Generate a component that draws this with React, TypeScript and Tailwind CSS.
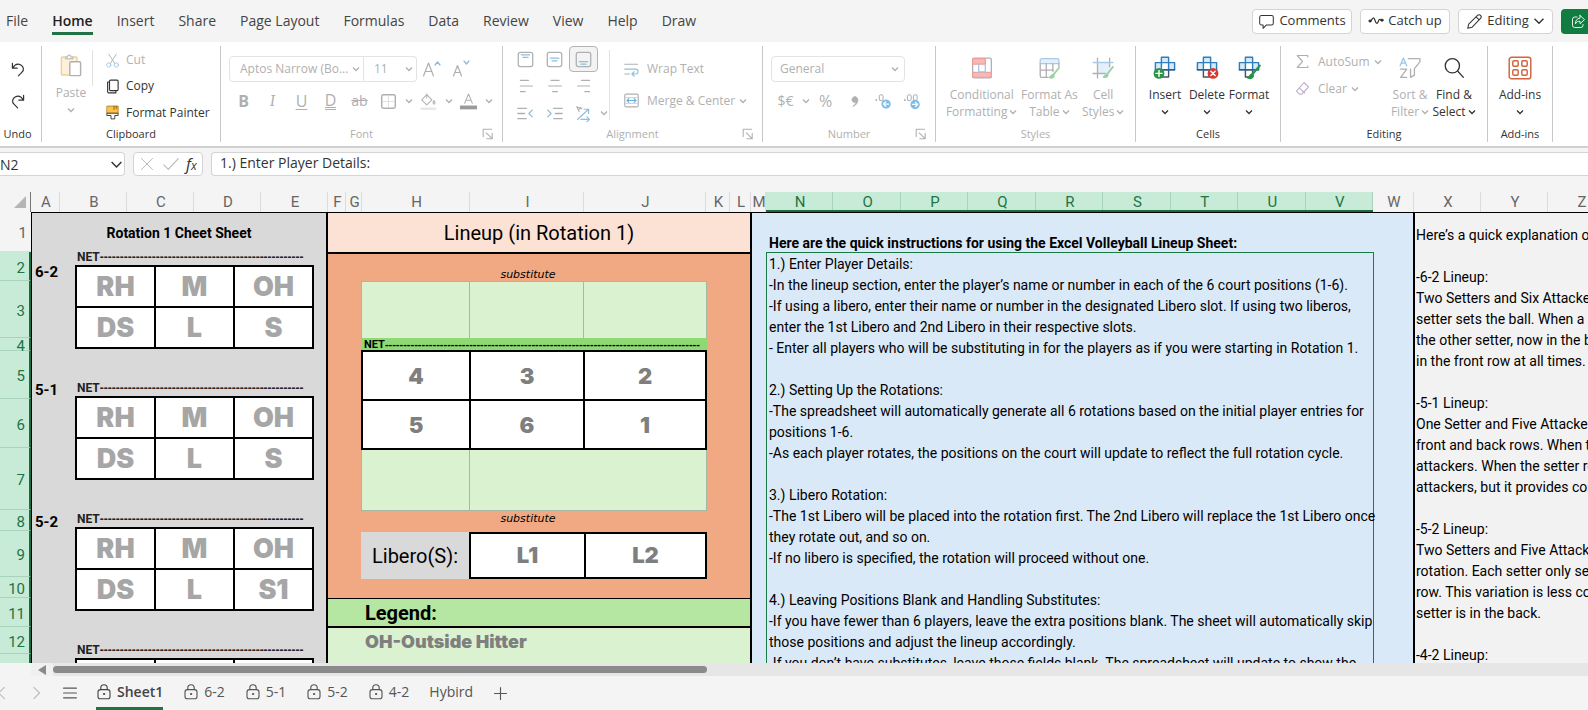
import React from "react";
import clsx from "clsx";

type IconProps = { children: React.ReactNode; size?: number; className?: string };

const Icon = ({ children, size = 18, className }: IconProps) => (
  <svg
    width={size}
    height={size}
    viewBox="0 0 20 20"
    fill="none"
    stroke="currentColor"
    strokeWidth={1.2}
    strokeLinecap="round"
    strokeLinejoin="round"
    className={clsx("shrink-0", className)}
    aria-hidden="true"
  >
    {children}
  </svg>
);

const Chevron = ({ size = 8, className }: { size?: number; className?: string }) => (
  <svg
    width={size}
    height={size}
    viewBox="0 0 8 8"
    fill="none"
    stroke="currentColor"
    strokeWidth={size > 8 ? 0.9 : 1.3}
    className={clsx("shrink-0", className)}
    aria-hidden="true"
  >
    <path d="M1 2.5 4 5.5 7 2.5" />
  </svg>
);

const menuTabs = [
  "File",
  "Home",
  "Insert",
  "Share",
  "Page Layout",
  "Formulas",
  "Data",
  "Review",
  "View",
  "Help",
  "Draw",
];

const MenuBar = () => (
  <header className="flex h-[42px] shrink-0 items-center overflow-hidden pl-1.5">
    <nav className="flex flex-1 gap-6">
      {menuTabs.map((tab) => (
        <button
          key={tab}
          className={clsx(
            "flex h-7 items-center whitespace-nowrap border-b-3 pt-0.5 text-sm",
            tab === "Home"
              ? "border-[#217346] font-semibold text-[#222]"
              : "border-transparent text-[#444]"
          )}
        >
          {tab}
        </button>
      ))}
    </nav>
    <div className="flex items-center gap-2 text-[13px] text-[#333]">
      <button className="flex h-[25px] w-[100px] items-center justify-center gap-1 rounded border border-[#d4d4d4] bg-white">
        <Icon size={17}>
          <path d="M4 3h12a2 2 0 0 1 2 2v7a2 2 0 0 1-2 2h-6l-4 4v-4H4a2 2 0 0 1-2-2V5a2 2 0 0 1 2-2Z" />
        </Icon>
        Comments
      </button>
      <button className="flex h-[25px] w-[90px] items-center justify-center gap-1 rounded border border-[#d4d4d4] bg-white">
        <Icon size={16}>
          <circle cx="2.5" cy="10" r="1.4" fill="currentColor" />
          <circle cx="17.5" cy="9" r="1.4" fill="currentColor" />
          <path d="M3 10c2-1 2.500-4 4-4s2 7 4 7 2-5 3.500-5 1 1.500 2.500 1" strokeWidth={1.5} />
        </Icon>
        Catch up
      </button>
      <button className="flex h-[25px] w-[95px] items-center justify-center gap-1 rounded border border-[#d4d4d4] bg-white">
        <Icon size={17}>
          <path d="m2 18 1.200-5L13.500 2.700a2.400 2.400 0 0 1 3.600 3.600L7 16.800 2 18ZM11.800 4.500l3.700 3.700" />
        </Icon>
        Editing
        <Chevron size={12} />
      </button>
      <button
        aria-label="Share"
        className="flex h-[25px] w-[27px] items-center rounded-l bg-[#107c41] pl-2.5 text-white"
      >
        <Icon size={15}>
          <path d="M8 4H5a3 3 0 0 0-3 3v8a3 3 0 0 0 3 3h8a3 3 0 0 0 3-3v-1" />
          <path d="M12 2v3.500C8 6 6 8.500 6 13c1.500-2.500 3-3.300 6-3.300V13l6-5.500L12 2Z" />
        </Icon>
      </button>
    </div>
  </header>
);

type GroupProps = {
  label: string;
  width: string;
  off?: boolean;
  launcher?: boolean;
  children: React.ReactNode;
};

const Group = ({ label, width, off, launcher, children }: GroupProps) => (
  <section
    className={clsx(
      "flex h-24 shrink-0 flex-col border-r border-[#c8c8c8] text-xs",
      off ? "text-[#b0b0b0]" : "text-[#333]",
      width
    )}
  >
    <div className="flex h-20">{children}</div>
    <div className="flex h-4 items-center justify-center text-[11px]">
      {launcher && <span className="w-5" />}
      <span className="flex-1 text-center">{label}</span>
      {launcher && (
        <button aria-label={label + " settings"} className="w-5">
          <Icon size={12}>
            <path d="M2 14V2h14M7 8l9 9M17 9v9H8" strokeWidth={1.8} />
          </Icon>
        </button>
      )}
    </div>
  </section>
);

const Tool = ({ label, children, active }: { label: string; children: React.ReactNode; active?: boolean }) => (
  <button
    aria-label={label}
    className={clsx(
      "flex h-[26px] w-[29px] items-center justify-center",
      active && "rounded border border-[#b5b5b5] bg-[#f3f3f3]"
    )}
  >
    {children}
  </button>
);

const Drop = ({ label }: { label: string }) => (
  <button aria-label={label} className="flex h-[26px] w-[11px] items-center justify-center">
    <Chevron />
  </button>
);

const BigButton = ({
  lines,
  icon,
  off,
  width,
}: {
  lines: string[];
  icon: React.ReactNode;
  off?: boolean;
  width: string;
}) => (
  <button
    className={clsx(
      "flex flex-col items-center whitespace-nowrap pt-2 text-xs leading-[17px]",
      off ? "text-[#b0b0b0]" : "text-[#333]",
      width
    )}
  >
    <span className="mb-1 flex h-7 items-center">{icon}</span>
    <span>{lines[0]}</span>
    <span className="flex h-[17px] items-center gap-0.5">
      {lines[1]}
      <Chevron />
    </span>
  </button>
);

const CellsIcon = ({ children }: { children: React.ReactNode }) => (
  <Icon size={24}>
    <path d="M7 1h6v4.500h5v6h-5v-6H7v6H2v-6h5Z" fill="#d6ebfa" stroke="#2f7fc0" />
    <path d="M7 11.500v6h6v-6Z" fill="#fff" stroke="#44546a" />
    <path d="M2 11.500h16" stroke="#2f5f8f" />
    {children}
  </Icon>
);

const AlignLines = ({ lines }: { lines: number[][] }) => (
  <Icon size={16}>
    {lines.map(([from, to], i) => (
      <path key={i} d={`M${from} ${3 + i * 7}H${to}`} strokeWidth={1.5} />
    ))}
  </Icon>
);

const Ribbon = () => (
  <div className="z-10 flex h-[106px] shrink-0 overflow-hidden border-b-2 border-[#d0d0d0] bg-white pt-1">
    <Group label="Undo" width="w-[42px] pr-1.5">
      <div className="flex w-full flex-col items-center gap-1.5 pt-2.5">
        <Tool label="Undo">
          <Icon size={16}>
            <path d="M3 3v6h6M3.500 8.500C6 4.500 10 3 13.500 5s4.500 6 1.500 9L10.500 18.500" strokeWidth={1.5} />
          </Icon>
        </Tool>
        <Tool label="Redo">
          <Icon size={16}>
            <path d="M17 3v6h-6M16.500 8.500C14 4.500 10 3 6.500 5S2 11 5 14l4.500 4.500" strokeWidth={1.5} />
          </Icon>
        </Tool>
      </div>
    </Group>

    <Group label="Clipboard" width="w-[179px]">
      <button className="flex w-[50px] flex-col items-center pl-2 pt-2 text-[#b0b0b0]">
        <Icon size={24}>
          <path d="M12 17.500H3a1 1 0 0 1-1-1V3.500a1 1 0 0 1 1-1h11a1 1 0 0 1 1 1V6" stroke="#f0cf95" fill="#fdf1dc" />
          <path d="M5.500 4V2.500h1.500a1.500 1.500 0 0 1 3 0h1.500V4Z" fill="#fff" stroke="#c5c5c5" />
          <rect x="9" y="6.500" width="9" height="11.500" rx="1" fill="#fff" />
        </Icon>
        <span className="mt-1.5 leading-[18px]">Paste</span>
        <Chevron className="mt-1" />
      </button>
      <div className="mt-1 h-9 border-r border-[#e1e1e1]" />
      <div className="flex flex-col pt-px pl-3">
        <button className="flex h-[27px] items-center gap-1.5 text-[#b0b0b0]">
          <Icon size={15}>
            <path d="M5 1.500 13 14M15 1.500 7 14" />
            <circle cx="5" cy="16" r="2.800" stroke="#9fc8e4" />
            <circle cx="15" cy="16" r="2.800" stroke="#9fc8e4" />
          </Icon>
          Cut
        </button>
        <button className="flex h-[27px] items-center gap-1.5">
          <Icon size={15}>
            <rect x="6" y="1.500" width="11.500" height="14" rx="1.500" strokeWidth={1.5} />
            <path d="M6 4H3.500v13a1.500 1.500 0 0 0 1.500 1.500h9.500V16" strokeWidth={1.5} />
          </Icon>
          Copy
        </button>
        <button className="flex h-[27px] items-center gap-1.5 whitespace-nowrap">
          <Icon size={15}>
            <path d="M3 1.500h14.500V11H3z" fill="#fbc34a" stroke="#b97b16" />
            <path d="M12 1.500V6M15 1.500V5" stroke="#8a5a10" />
            <path d="M3 11h14.500v3H13v4.500H8V14H3z" fill="#fff" />
          </Icon>
          Format Painter
        </button>
      </div>
    </Group>

    <Group label="Font" width="w-[282px]" off launcher>
      <div className="flex flex-col gap-1.5 pl-2 pt-2.5">
        <div className="flex items-center">
          <label className="relative flex items-center">
            <span className="sr-only">Font name</span>
            <select className="h-[26px] w-[135px] appearance-none rounded-l border border-[#e3e3e3] pl-2.5">
              <option>Aptos Narrow (Bo...</option>
            </select>
            <Chevron className="absolute right-1" />
          </label>
          <label className="relative flex items-center">
            <span className="sr-only">Font size</span>
            <select className="h-[26px] w-[53px] appearance-none rounded-r border border-l-0 border-[#e3e3e3] pl-2.5">
              <option>11</option>
            </select>
            <Chevron className="absolute right-1" />
          </label>
          <Tool label="Increase font size">
            <Icon size={20}>
              <path d="m1.500 17 5-13 5 13M3.300 12.500h6.400" />
              <path d="m13 6 2.500-3L18 6" stroke="#8fb9d6" />
            </Icon>
          </Tool>
          <Tool label="Decrease font size">
            <Icon size={20}>
              <path d="m2.500 17 4-10.500L10.500 17M4 13.500h5" />
              <path d="m13 2 2.500 3L18 2" stroke="#8fb9d6" />
            </Icon>
          </Tool>
        </div>
        <div className="flex text-base">
          <Tool label="Bold">
            <span className="font-bold">B</span>
          </Tool>
          <Tool label="Italic">
            <span className="font-serif italic">I</span>
          </Tool>
          <Tool label="Underline">
            <span className="underline underline-offset-2">U</span>
          </Tool>
          <Tool label="Double underline">
            <span className="border-b-3 border-double border-[#b0b0b0] leading-[14px]">D</span>
          </Tool>
          <Tool label="Strikethrough">
            <span className="text-sm line-through">ab</span>
          </Tool>
          <Tool label="Borders">
            <Icon size={17}>
              <rect x="2" y="2" width="16" height="16" rx="2" strokeWidth={1.7} />
              <path d="M10 3v14M3 10h14" stroke="#dcdcdc" strokeWidth={1} />
            </Icon>
          </Tool>
          <Drop label="Border styles" />
          <Tool label="Fill colour">
            <Icon size={17}>
              <path d="m8 2 6 6-6 6-6-6 6-6ZM8 6V1M16.500 9c1.500 2 1.500 4 0 4s-1.500-2 0-4Z" />
              <path d="M2 18.500h16" stroke="#e8e8e8" strokeWidth={3} />
            </Icon>
          </Tool>
          <Drop label="Fill colours" />
          <Tool label="Font colour">
            <Icon size={17}>
              <path d="M5.500 12 10 1l4.500 11M7 8.500h6" />
              <path d="M0 17h20" stroke="#9a9a9a" strokeWidth={4.5} strokeLinecap="butt" />
            </Icon>
          </Tool>
          <Drop label="Font colours" />
        </div>
      </div>
    </Group>

    <Group label="Alignment" width="w-[260px]" off launcher>
      <div className="flex flex-col gap-px pl-2">
        <div className="flex">
          {[4.5, 8.5, 12.5].map((y, i) => (
            <Tool key={y} label={["Top", "Middle", "Bottom"][i]} active={i === 2}>
              <Icon size={17}>
                <rect x="1.500" y="1.500" width="17" height="17" rx="2.500" strokeWidth={1.5} />
                <path d={`M5 ${y}h10M7 ${y + 3}h6`} stroke="#8cc0e0" strokeWidth={1.5} />
              </Icon>
            </Tool>
          ))}
        </div>
        <div className="flex">
          <Tool label="Align left">
            <AlignLines lines={[[3, 13], [3, 18], [3, 9]]} />
          </Tool>
          <Tool label="Centre">
            <AlignLines lines={[[5, 15], [2, 18], [7, 13]]} />
          </Tool>
          <Tool label="Align right">
            <AlignLines lines={[[7, 17], [2, 17], [11, 17]]} />
          </Tool>
        </div>
        <div className="flex">
          <Tool label="Decrease indent">
            <Icon size={17}>
              <path d="M1 4h10M1 10h8M1 16h10" strokeWidth={1.5} />
              <path d="m18 6-4 4 4 4" stroke="#8cc0e0" strokeWidth={1.5} />
            </Icon>
          </Tool>
          <Tool label="Increase indent">
            <Icon size={17}>
              <path d="M9 4h10M11 10h8M9 16h10" strokeWidth={1.5} />
              <path d="m2 6 4 4-4 4" stroke="#8cc0e0" strokeWidth={1.5} />
            </Icon>
          </Tool>
          <Tool label="Orientation">
            <Icon size={17}>
              <path d="m2 2 6 2.500M2 2l3 6M4 6l3-3" />
              <path d="M3 17 16 5M11 5h5v5M7 17h10M14 14l3 3-3 3" stroke="#8cc0e0" strokeWidth={1.4} />
            </Icon>
          </Tool>
          <Drop label="Orientations" />
        </div>
      </div>
      <div className="mt-1 h-[70px] border-r border-[#e1e1e1]" />
      <div className="flex flex-col gap-1.5 pl-3.5 pt-2.5">
        <button className="flex h-[26px] items-center gap-2">
          <Icon size={15}>
            <path d="M1 3h17M1 16h6" strokeWidth={1.5} />
            <path d="M1 9.500h14.500a3 3 0 0 1 0 6.500H11M13.500 13 10.500 16l3 3" stroke="#8cc0e0" strokeWidth={1.5} />
          </Icon>
          Wrap Text
        </button>
        <button className="flex h-[25px] items-center gap-2 whitespace-nowrap">
          <Icon size={15}>
            <rect x="1" y="1.500" width="18" height="17" rx="2" strokeWidth={1.5} />
            <path d="M2 6h16M2 14h16" stroke="#d0d0d0" />
            <path d="M4 10h12M6.500 7.500 4 10l2.500 2.500M13.500 7.500 16 10l-2.500 2.500" stroke="#6cb0dc" strokeWidth={1.5} />
          </Icon>
          Merge & Center
          <Chevron className="-ml-1" />
        </button>
      </div>
    </Group>

    <Group label="Number" width="w-[173px]" off launcher>
      <div className="flex flex-col gap-1.5 pl-2 pt-2.5">
        <label className="relative flex w-[134px] items-center">
          <span className="sr-only">Number format</span>
          <select className="h-[26px] w-full appearance-none rounded border border-[#e3e3e3] pl-2">
            <option>General</option>
          </select>
          <Chevron className="absolute right-1.5" />
        </label>
        <div className="flex text-sm">
          <Tool label="Currency">$€</Tool>
          <Drop label="Currencies" />
          <Tool label="Percent">
            <span className="text-base">%</span>
          </Tool>
          <Tool label="Comma">
            <Icon size={14}>
              <path d="M10 4a4 4 0 1 0 1.500 7.500C11 14 9.500 16 7 17.500 12 16 14.500 12 14 7.500 13.700 5.500 12 4 10 4Z" fill="currentColor" />
            </Icon>
          </Tool>
          <Tool label="Decrease decimal">
            <Icon size={17}>
              <path d="M1.500 8v.5" strokeWidth={2} />
              <rect x="5" y="2" width="4.500" height="7" rx="2.200" />
              <circle cx="13" cy="13" r="5.500" fill="#7fbdea" stroke="none" />
              <path d="M16 13h-6M12.500 10.500 10 13l2.500 2.500" stroke="#fff" strokeWidth={1.5} />
            </Icon>
          </Tool>
          <Tool label="Increase decimal">
            <Icon size={17}>
              <path d="M1 8v.5" strokeWidth={2} />
              <rect x="4" y="2" width="4.500" height="7" rx="2.200" />
              <rect x="11" y="2" width="4.500" height="7" rx="2.200" />
              <circle cx="13" cy="13.500" r="5.500" fill="#7fbdea" stroke="none" />
              <path d="M10 13.500h6M13.500 11l2.500 2.500-2.500 2.500" stroke="#fff" strokeWidth={1.5} />
            </Icon>
          </Tool>
        </div>
      </div>
    </Group>

    <Group label="Styles" width="w-[200px]" off>
      <BigButton
        off
        width="w-[92px]"
        lines={["Conditional", "Formatting"]}
        icon={
          <Icon size={22}>
            <rect x="1.500" y="1" width="17" height="18" rx="1.500" fill="#fff" />
            <path d="M1.500 1.500H13v5H1.500zM1.500 14h17v4.500h-17z" fill="#f9b8b5" stroke="#ef9f9c" />
            <path d="M7 7v6.500h6V7" stroke="#a9c6e8" />
          </Icon>
        }
      />
      <BigButton
        off
        width="w-[44px]"
        lines={["Format As", "Table"]}
        icon={
          <Icon size={22}>
            <path d="M2 6h17V3a1.500 1.500 0 0 0-1.500-1.500h-14A1.500 1.500 0 0 0 2 3v3Z" fill="#e3f0fb" stroke="#a9cbe8" />
            <path d="M2 6v11a1.500 1.500 0 0 0 1.500 1.500H9M2 12h12M7.500 6v12M13.500 6v7M19 6v3" />
            <path d="m19 10-5 6M14 16c-2 0-1.500 2-3.500 2.500 2 .8 4.500 0 3.500-2.500Z" stroke="#98d3a0" fill="#98d3a0" strokeWidth={1.7} />
          </Icon>
        }
      />
      <BigButton
        off
        width="w-16"
        lines={["Cell", "Styles"]}
        icon={
          <Icon size={22}>
            <path d="M5 5h11v10H5z" fill="#e3f0fb" stroke="none" />
            <path d="M5 1v18M16 1v8M1 15h11" />
            <path d="M1 5h18" stroke="#a9cbe8" />
            <path d="m19 9-5 6.500M14 15.500c-2 0-1.500 2-3.500 2.500 2 .8 4.500 0 3.500-2.500Z" stroke="#98d3a0" fill="#98d3a0" strokeWidth={1.7} />
          </Icon>
        }
      />
    </Group>

    <Group label="Cells" width="w-[145px]">
      <div className="flex pl-2">
        <BigButton
          width="w-[42px]"
          lines={["Insert"]}
          icon={
            <CellsIcon>
              <circle cx="5" cy="14.500" r="4.500" fill="#2b9348" stroke="none" />
              <path d="M5 12v5M2.500 14.500h5" stroke="#fff" />
            </CellsIcon>
          }
        />
        <BigButton
          width="w-[42px]"
          lines={["Delete"]}
          icon={
            <CellsIcon>
              <circle cx="15" cy="14.500" r="4.500" fill="#d93831" stroke="none" />
              <path d="m13.200 12.700 3.600 3.600M16.800 12.700l-3.600 3.600" stroke="#fff" />
            </CellsIcon>
          }
        />
        <BigButton
          width="w-[42px]"
          lines={["Format"]}
          icon={
            <CellsIcon>
              <path d="m19 8-6 7M13 15c-2 0-1.500 2.500-4 3 2.500 1 5 0 4-3Z" stroke="#2b9348" fill="#2b9348" strokeWidth={1.8} />
            </CellsIcon>
          }
        />
      </div>
    </Group>

    <Group label="Editing" width="w-[207px]">
      <div className="flex w-[108px] flex-col pl-3.5 pt-0.5 text-[#b0b0b0]">
        <button className="flex h-[27px] items-center gap-2">
          <Icon size={15}>
            <path d="M17 4V2H3l7 8-7 8h14v-2" strokeWidth={1.6} />
          </Icon>
          AutoSum
          <Chevron className="-ml-1" />
        </button>
        <button className="flex h-[27px] items-center gap-2">
          <Icon size={15}>
            <path d="m12 2 6 6-9 9.500H6L2 13.500 12 2Z" stroke="#c3aecb" strokeWidth={1.5} />
            <path d="m6 9.500 7 6.500" stroke="#c3aecb" strokeWidth={1.5} />
          </Icon>
          Clear
          <Chevron className="-ml-1" />
        </button>
      </div>
      <BigButton
        off
        width="w-[42px]"
        lines={["Sort &", "Filter"]}
        icon={
          <Icon size={22}>
            <path d="m1 8 3-7 3 7M2 5.500h4" stroke="#9cc7ea" />
            <path d="M1.500 11H7l-5.500 7.500H7" />
            <path d="M8.500 1.500H19v3l-5 6v6l-3.500 2V11" />
          </Icon>
        }
      />
      <BigButton
        width="w-[46px]"
        lines={["Find &", "Select"]}
        icon={
          <Icon size={22}>
            <circle cx="8.500" cy="8" r="6.500" />
            <path d="m13.500 13 5 5.500" />
          </Icon>
        }
      />
    </Group>

    <Group label="Add-ins" width="w-[65px]">
      <BigButton
        width="w-full"
        lines={["Add-ins"]}
        icon={
          <Icon size={24}>
            <g stroke="#d0643f">
              <rect x="1" y="1" width="18" height="18" rx="2" />
              <rect x="4" y="4" width="4.500" height="4.500" rx="1" />
              <rect x="11.500" y="4" width="4.500" height="4.500" rx="1" />
              <rect x="4" y="11.500" width="4.500" height="4.500" rx="1" />
              <rect x="11.500" y="11.500" width="4.500" height="4.500" rx="1" />
            </g>
          </Icon>
        }
      />
    </Group>
  </div>
);

const FormulaBar = () => (
  <div className="flex h-11 shrink-0 items-start gap-2 pt-1 text-sm text-[#333]">
    <label className="relative flex items-center">
      <span className="sr-only">Name box</span>
      <input
        defaultValue="N2"
        className="h-6 w-[125px] rounded-r border border-l-0 border-[#d4d4d4] bg-white"
      />
      <Chevron size={13} className="absolute right-0.5" />
    </label>
    <div className="flex h-6 w-[70px] items-center justify-around rounded border border-[#d4d4d4] bg-white px-0.5 text-[#b8b8b8]">
      <button aria-label="Cancel">
        <Icon size={16}>
          <path d="m3 3 14 14M17 3 3 17" />
        </Icon>
      </button>
      <button aria-label="Enter">
        <Icon size={18}>
          <path d="m2 11 5 5L18 4" />
        </Icon>
      </button>
      <button className="text-base leading-5 text-[#333] italic">
        f<span className="text-xs">x</span>
      </button>
    </div>
    <input
      aria-label="Formula"
      defaultValue="1.) Enter Player Details:"
      className="h-6 flex-1 rounded-l border border-r-0 border-[#d4d4d4] bg-white pb-1 pl-2"
    />
  </div>
);

const leftColumns = [
  ["A", "w-[29px]"],
  ["B", "w-[67px]"],
  ["C", "w-[67px]"],
  ["D", "w-[67px]"],
  ["E", "w-[67px]"],
  ["F", "w-[18px]"],
  ["G", "w-4"],
  ["H", "w-[108px]"],
  ["I", "w-[114px]"],
  ["J", "w-[122px]"],
  ["K", "w-6"],
  ["L", "w-[21px]"],
  ["M", "w-[15px]"],
];

const rightColumns = [
  ["W", "w-[41px]"],
  ["X", "w-[67px]"],
  ["Y", "w-[67px]"],
  ["Z", "w-[67px]"],
];

const ColumnLetter = ({ name, width }: { name: string; width: string }) => (
  <div className={clsx("flex shrink-0 items-center justify-center border-r border-[#dcdcdc] pl-0.5", width)}>
    {name}
  </div>
);

const ColumnHeader = () => (
  <div className="flex h-5 shrink-0 font-['Roboto',sans-serif] text-[15px] leading-none text-[#666]">
    <div className="flex w-[31px] shrink-0 items-center justify-end border-r border-[#777] pr-1">
      <svg width="12" height="12" viewBox="0 0 12 12" aria-hidden="true">
        <path d="M12 0v12H0z" fill="#b5b5b5" />
      </svg>
    </div>
    {leftColumns.map(([name, width]) => (
      <ColumnLetter key={name} name={name} width={width} />
    ))}
    <div className="flex w-[607px] shrink-0 border-b-2 border-[#1b6b41] bg-[#c8ebd7] text-[#217346]">
      {"NOPQRSTUV".split("").map((name) => (
        <div key={name} className="flex flex-1 items-center justify-center border-r border-[#a9d3bb] pt-0.5 pl-0.5">
          {name}
        </div>
      ))}
    </div>
    {rightColumns.map(([name, width]) => (
      <ColumnLetter key={name} name={name} width={width} />
    ))}
  </div>
);

const rows = [
  "h-10",
  "h-[29px]",
  "h-[57px]",
  "h-[13px]",
  "h-12",
  "h-[49px]",
  "h-[62px]",
  "h-[21px]",
  "h-[46px]",
  "h-[21px]",
  "h-[29px]",
  "h-[27px]",
  "h-[27px]",
];

const RowHeader = () => (
  <div className="w-[31px] shrink-0 text-[15px]">
    {rows.map((height, i) => (
      <div
        key={i}
        className={clsx(
          "flex items-center justify-end border-b pt-1 pr-1 leading-none",
          height,
          i === 0
            ? "border-[#c8ebd7] text-[#666]"
            : "border-r-2 border-b-[#a9d3bb] border-r-[#1b6b41] bg-[#c8ebd7] text-[#217346]"
        )}
      >
        {i < 12 && i + 1}
      </div>
    ))}
  </div>
);

const NetLine = ({ dashes }: { dashes: number }) => (
  <>
    NET<span className="font-['Liberation_Sans']">{"-".repeat(dashes)}</span>
  </>
);

const MiniCourt = ({ last = "S" }: { last?: string }) => (
  <div className="h-[131px]">
    <div className="h-[13px] pl-0.5 text-xs leading-[11px] font-bold whitespace-nowrap text-[#222]">
      <NetLine dashes={51} />
    </div>
    <table className="w-[239px] table-fixed border-collapse bg-white text-center font-['Inter'] text-[27px] leading-none font-black text-[#a6a6a6]">
      <tbody>
        {[
          ["RH", "M", "OH"],
          ["DS", "L", last],
        ].map((line) => (
          <tr key={line[0]} className="h-[41px]">
            {line.map((cell) => (
              <td key={cell} className="border-2 border-black p-0">
                {cell}
              </td>
            ))}
          </tr>
        ))}
      </tbody>
    </table>
  </div>
);

const lineupNames: Record<number, string> = { 1: "6-2", 4: "5-1", 7: "5-2" };

const CheatSheet = () => (
  <div className="w-[297px] shrink-0 border-r-2 border-l border-black bg-[#d9d9d9]">
    <h2 className="flex h-[39px] items-center justify-center text-sm font-bold">Rotation 1 Cheet Sheet</h2>
    <div className="flex">
      <div className="w-[43px] shrink-0 pl-[3px] text-[15px] leading-[18px] font-bold">
        {rows.slice(1).map((height, i) => (
          <div key={i} className={clsx("flex items-end", height)}>
            {lineupNames[i + 1]}
          </div>
        ))}
      </div>
      <div>
        <MiniCourt />
        <MiniCourt />
        <MiniCourt last="S1" />
        <MiniCourt />
      </div>
    </div>
  </div>
);

const Lineup = () => (
  <div className="flex w-[424px] shrink-0 flex-col border-r-2 border-black bg-[#f1a983]">
    <h1 className="flex h-[41px] shrink-0 items-center justify-center border-b-2 border-black bg-[#fbe2d5] text-xl">
      Lineup (in Rotation 1)
    </h1>
    <div className="ml-[33px] h-[344px] w-[346px] shrink-0 text-center">
      <div className="flex h-[27px] items-end justify-center pr-3 font-['DejaVu_Sans'] text-[11px] leading-3 italic">
        substitute
      </div>
      <div className="flex h-[57px] border border-b-0 border-[#a9b8a2] bg-[#daf2d0]">
        <div className="w-[108px] border-r border-[#a9b8a2]" />
        <div className="w-[114px] border-r border-[#a9b8a2]" />
      </div>
      <div className="h-3 bg-[#8ed973] pl-[3px] text-left text-[11px] leading-3 font-bold whitespace-nowrap">
        <NetLine dashes={86} />
      </div>
      <table className="w-full table-fixed border-collapse bg-white font-['Inter'] text-[22px] leading-none font-black text-[#7f7f7f]">
        <colgroup>
          <col className="w-[108px]" />
          <col className="w-[114px]" />
          <col />
        </colgroup>
        <tbody>
          {[
            [4, 3, 2],
            [5, 6, 1],
          ].map((line) => (
            <tr key={line[0]} className="h-[49px]">
              {line.map((spot) => (
                <td key={spot} className="border-2 border-black p-0">
                  {spot}
                </td>
              ))}
            </tr>
          ))}
        </tbody>
      </table>
      <div className="flex h-[61px] border border-t-0 border-[#a9b8a2] bg-[#daf2d0]">
        <div className="w-[108px] border-r border-[#a9b8a2]" />
      </div>
      <div className="flex h-[21px] items-center justify-center pr-3 pb-1 font-['DejaVu_Sans'] text-[11px] italic">
        substitute
      </div>
      <div className="flex h-[47px] items-stretch">
        <div className="flex w-[108px] items-center justify-center bg-[#d9d9d9] text-xl">Libero(S):</div>
        <div className="flex w-[115px] items-center justify-center border-2 border-r-0 border-black bg-white font-['Inter'] text-[22px] font-black text-[#7f7f7f]">
          L1
        </div>
        <div className="flex flex-1 items-center justify-center border-2 border-black bg-white font-['Inter'] text-[22px] font-black text-[#7f7f7f]">
          L2
        </div>
      </div>
    </div>
    <h2 className="flex h-[30px] shrink-0 items-center border-t border-b-2 border-black bg-[#b5e6a2] pl-[37px] text-xl font-bold">
      Legend:
    </h2>
    <p className="flex-1 bg-[#daf2d0] pl-[37px] font-['Inter'] text-lg font-black text-[#7f7f7f]">
      OH-Outside Hitter
    </p>
  </div>
);

const instructions = [
  "1.) Enter Player Details:",
  "-In the lineup section, enter the player’s name or number in each of the 6 court positions (1-6).",
  "-If using a libero, enter their name or number in the designated Libero slot. If using two liberos,",
  "enter the 1st Libero and 2nd Libero in their respective slots.",
  "- Enter all players who will be substituting in for the players as if you were starting in Rotation 1.",
  "",
  "2.) Setting Up the Rotations:",
  "-The spreadsheet will automatically generate all 6 rotations based on the initial player entries for",
  "positions 1-6.",
  "-As each player rotates, the positions on the court will update to reflect the full rotation cycle.",
  "",
  "3.) Libero Rotation:",
  "-The 1st Libero will be placed into the rotation first. The 2nd Libero will replace the 1st Libero once",
  "they rotate out, and so on.",
  "-If no libero is specified, the rotation will proceed without one.",
  "",
  "4.) Leaving Positions Blank and Handling Substitutes:",
  "-If you have fewer than 6 players, leave the extra positions blank. The sheet will automatically skip",
  "those positions and adjust the lineup accordingly.",
  "-If you don’t have substitutes, leave those fields blank. The spreadsheet will update to show the",
];

const explanation = [
  "Here’s a quick explanation of",
  "",
  "-6-2 Lineup:",
  "Two Setters and Six Attackers",
  "setter sets the ball. When a s",
  "the other setter, now in the b",
  "in the front row at all times.",
  "",
  "-5-1 Lineup:",
  "One Setter and Five Attackers",
  "front and back rows. When th",
  "attackers. When the setter ro",
  "attackers, but it provides con",
  "",
  "-5-2 Lineup:",
  "Two Setters and Five Attackers",
  "rotation. Each setter only set",
  "row. This variation is less com",
  "setter is in the back.",
  "",
  "-4-2 Lineup:",
];

const Lines = ({ lines }: { lines: string[] }) => (
  <>
    {lines.map((line, i) => (
      <p key={i} className="h-[21px] text-sm leading-[21px] whitespace-nowrap">
        {line}
      </p>
    ))}
  </>
);

const Sheet = () => (
  <main className="flex min-h-0 flex-1 overflow-hidden font-['Roboto',sans-serif] text-black">
    <RowHeader />
    <div className="flex min-w-0 flex-1 overflow-hidden border-t border-black">
      <CheatSheet />
      <Lineup />
      <div className="w-[663px] shrink-0 border-r-2 border-black bg-[#dae9f8] pl-3.5">
        <h2 className="flex h-[39px] items-end pl-[3px] text-sm leading-[18px] font-bold">
          Here are the quick instructions for using the Excel Volleyball Lineup Sheet:
        </h2>
        <div className="w-[608px] border border-[#1b7b46] pt-px pl-0.5">
          <Lines lines={instructions} />
        </div>
      </div>
      <div className="min-w-0 flex-1 bg-[#f2f2f2] pt-3 pl-px">
        <Lines lines={explanation} />
      </div>
    </div>
  </main>
);

const sheetTabs = ["Sheet1", "6-2", "5-1", "5-2", "4-2", "Hybird"];

const SheetTabs = () => (
  <footer className="flex h-[34px] shrink-0 items-center overflow-hidden text-sm text-[#555]">
    <button aria-label="Previous sheet" className="w-6 text-[#bbb]">
      <Icon size={14} className="-ml-1">
        <path d="m12 2-8 8 8 8" strokeWidth={1.6} />
      </Icon>
    </button>
    <button aria-label="Next sheet" className="flex w-6 justify-center text-[#bbb]">
      <Icon size={14}>
        <path d="m7 2 8 8-8 8" strokeWidth={1.6} />
      </Icon>
    </button>
    <button aria-label="All sheets" className="flex w-11 justify-center">
      <Icon size={16}>
        <path d="M2 4h16M2 10h16M2 16h16" strokeWidth={1.5} />
      </Icon>
    </button>
    <div className="flex h-full gap-5 pl-1">
      {sheetTabs.map((tab) => (
        <button
          key={tab}
          className={clsx(
            "flex items-center gap-[5px] border-b-3",
            tab === "Sheet1" ? "border-[#217346] font-semibold text-[#444]" : "border-transparent"
          )}
        >
          {tab !== "Hybird" && (
            <Icon size={16}>
              <rect x="2.500" y="7" width="15" height="11.500" rx="3" strokeWidth={1.4} />
              <path d="M6 7V5a4 4 0 0 1 8 0v2" strokeWidth={1.4} />
              <circle cx="10" cy="12.500" r=".8" fill="currentColor" />
            </Icon>
          )}
          {tab}
        </button>
      ))}
      <button aria-label="New sheet" className="flex items-center">
        <Icon size={15}>
          <path d="M10 2v16M2 10h16" strokeWidth={1.5} />
        </Icon>
      </button>
    </div>
  </footer>
);

const App = () => {
  return (
    <div className="flex h-screen flex-col overflow-hidden bg-[#f4f4f4] font-['Open_Sans',sans-serif]">
      <MenuBar />
      <Ribbon />
      <FormulaBar />
      <ColumnHeader />
      <Sheet />
      <div className="ml-[31px] flex h-[13px] shrink-0 items-center bg-[#e6e6e6]">
        <div className="flex h-full w-[22px] items-center justify-center bg-[#f0f0f0]">
          <svg width="8" height="10" viewBox="0 0 8 10" aria-hidden="true">
            <path d="M8 0v10L0 5z" fill="#8a8a8a" />
          </svg>
        </div>
        <div className="h-[7px] w-[42%] rounded-full bg-[#8a8a8a]" />
      </div>
      <SheetTabs />
    </div>
  );
};

export default App;
